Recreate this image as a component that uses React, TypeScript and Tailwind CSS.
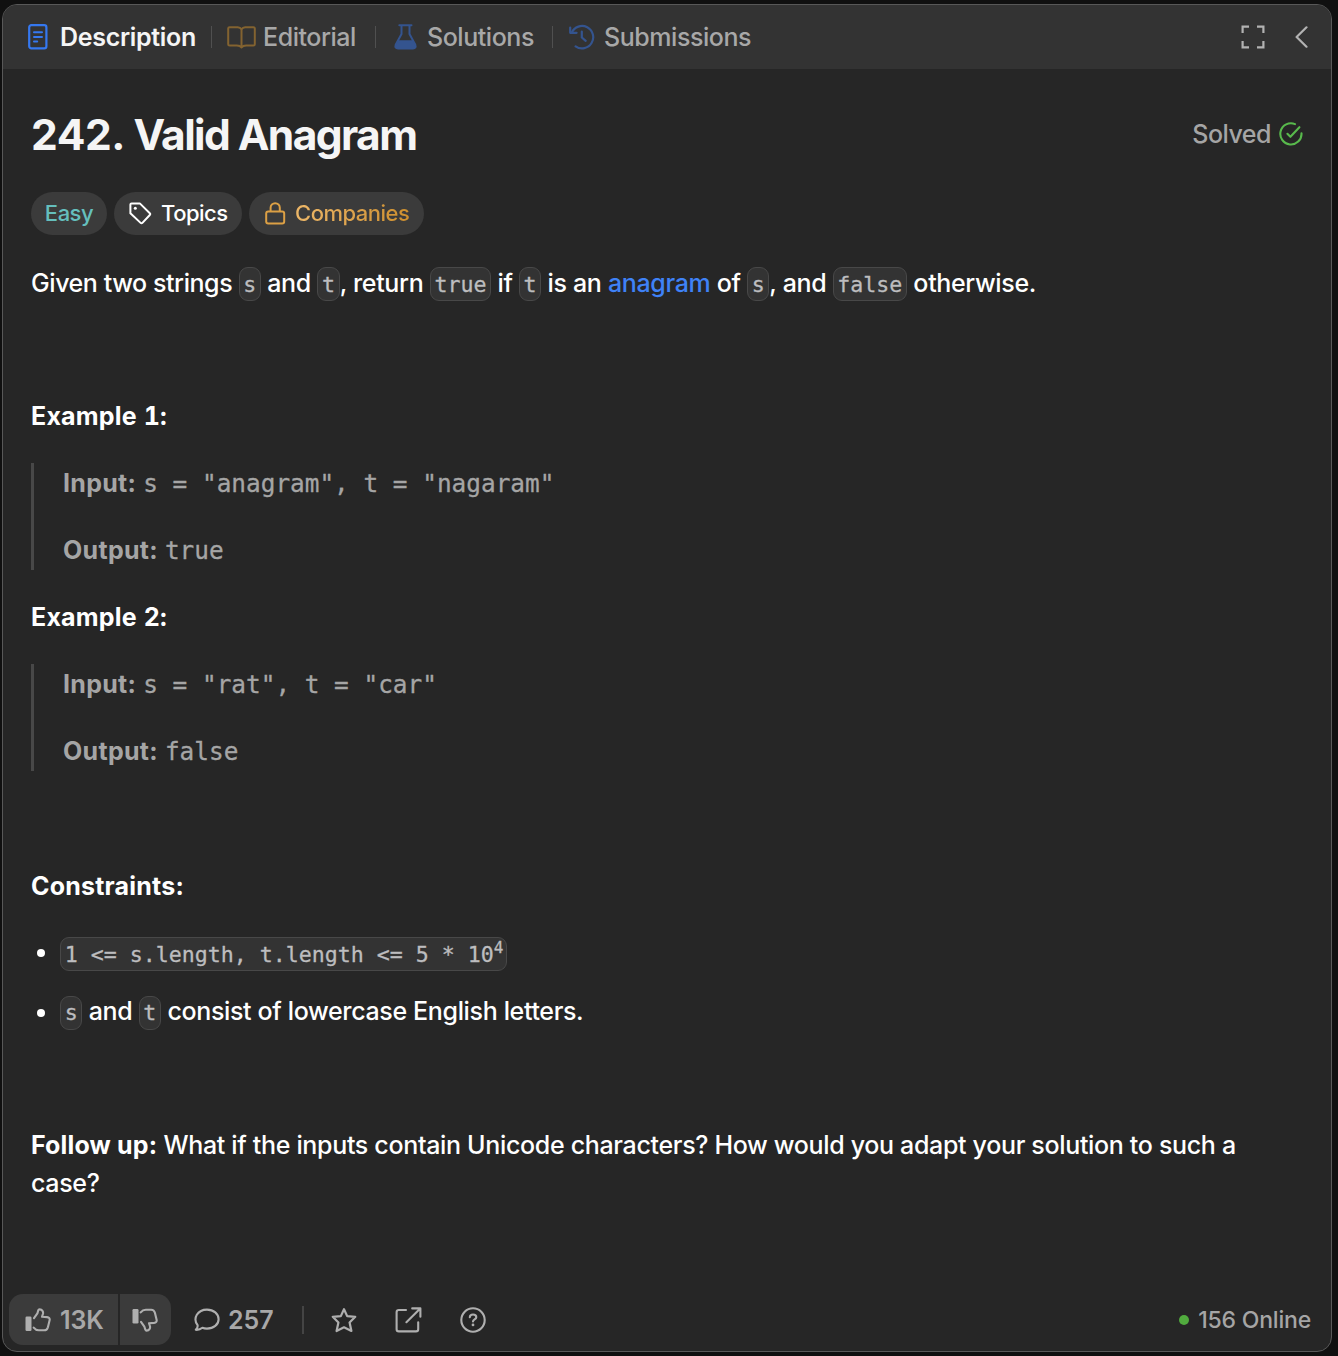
import type { ReactNode } from "react";

function Code({ children, className = "mb-[2px]" }: { children: ReactNode; className?: string }) {
  return (
    <code
      className={`inline-flex h-[34px] items-center rounded-[9px] border border-[#484848] bg-[#333333] px-[3.7px] pt-px align-middle font-['DejaVu_Sans_Mono',monospace] text-[21.6px] leading-none tracking-normal whitespace-pre text-[#bdbdbf] [-webkit-text-stroke:0.3px_#bdbdbf] ${className}`}
    >
      {children}
    </code>
  );
}

function Divider({ className = "" }: { className?: string }) {
  return <div className={`h-[22px] w-px shrink-0 bg-[#505050] ${className}`} />;
}

function Example({ title, input, output, className }: { title: string; input: string; output: string; className: string }) {
  return (
    <section className={className}>
      <h2 className="text-[25px] leading-[38px] font-bold tracking-[0.2px] text-white [font-feature-settings:'tnum']">{title}</h2>
      <div className="mt-[28px] flex h-[107px] flex-col gap-[29.5px] border-l-[3px] border-[#484848] pt-[0.5px] pl-[29px] text-[#a5a5a5]">
        <Field label="Input:" value={input} />
        <Field label="Output:" value={output} />
      </div>
    </section>
  );
}

function Field({ label, value }: { label: string; value: string }) {
  return (
    <div className="flex h-[38px] items-baseline gap-[7px] leading-[38px] whitespace-pre">
      <b className="text-[25px] font-bold tracking-[0.3px]">{label}</b>
      <span className="font-['DejaVu_Sans_Mono',monospace] text-[24.4px] [-webkit-text-stroke:0.3px_#a5a5a5]">{value}</span>
    </div>
  );
}

function ThumbIcon({ className = "" }: { className?: string }) {
  return (
    <svg width="26" height="24" viewBox="0 0 26 24" fill="none" className={className}>
      <rect x="0.5" y="8.5" width="6" height="14.5" rx="1.2" fill="#afafaf" />
      <path
        d="M9 10.2L12.2 5.6C13.2 4.2 12.6 1.4 14.6 1.4C17.2 1.4 18.6 3.6 17.9 6L17 8.8L22 9.1C24.2 9.3 25 10.6 24.6 12.3L22.9 19.2C22.3 21.4 21.2 22.3 19.2 22.3H13.8C11.6 22.3 10 21.3 8.7 19.6"
        stroke="#afafaf"
        strokeWidth="2.1"
        strokeLinejoin="round"
        strokeLinecap="round"
      />
    </svg>
  );
}

export default function App() {
  return (
    <div className="h-[1356px] w-[1338px] bg-[#101010] pt-[4px] pl-[2px] font-['Inter',sans-serif]">
      <main className="flex h-[1348px] w-[1330px] flex-col overflow-hidden rounded-[15px] border border-[#585858] bg-[#262626]">
        <header className="flex h-[64px] shrink-0 items-center bg-[#333333] pl-[25px] text-[25px] font-[450] tracking-[-0.45px] text-[#a8a8a8] [&>span]:mt-[2px]">
          <svg width="20" height="26" viewBox="0 0 20 26" fill="none" stroke="#3578f0" strokeLinecap="round">
            <rect x="1.2" y="1.2" width="17.2" height="23.2" rx="2.2" strokeWidth="2.2" />
            <path d="M6 8.3h8M6 13h8M6 17.6h3.2" strokeWidth="2" />
          </svg>
          <span className="ml-[12px] w-[137px] font-semibold tracking-[-0.3px] text-[#f5f5f5]">Description</span>
          <Divider className="ml-[14px]" />
          <svg className="ml-[15px]" width="29" height="23" viewBox="0 0 29 23" fill="none" stroke="#836330" strokeWidth="2" strokeLinejoin="round">
            <path d="M14.5 3.3C13.6 1.8 12.3 1.2 10.8 1.2H2.6Q1.2 1.2 1.2 2.6V18.2Q1.2 19.4 2.6 19.4H9.8C12 19.4 13.6 19.9 14.5 21.4C15.4 19.9 17 19.4 19.2 19.4H26.4Q27.8 19.4 27.8 18.2V2.6Q27.8 1.2 26.4 1.2H18.2C16.7 1.2 15.4 1.8 14.5 3.3Z" />
            <path d="M14.5 3.3V20.5" />
          </svg>
          <span className="ml-[7px] w-[95px]">Editorial</span>
          <Divider className="ml-[17px]" />
          <svg className="ml-[18px]" width="23" height="26" viewBox="0 0 23 26" fill="none" stroke="#34548f" strokeWidth="2">
            <path d="M5.3 1.3h12.2" strokeLinecap="round" />
            <path d="M7.5 1.5V10L1.7 20.8Q0.6 24.5 4 24.5H19Q22.4 24.5 21.3 20.8L15.5 10V1.5" strokeLinejoin="round" />
            <path d="M4.3 16.2H18.7L21.4 21.2Q22.2 24.5 19 24.5H4Q0.8 24.5 1.6 21.2Z" fill="#34548f" stroke="none" />
          </svg>
          <span className="ml-[10px] w-[108px]">Solutions</span>
          <Divider className="ml-[17px]" />
          <svg className="ml-[16px]" width="26" height="26" viewBox="0 0 26 26" fill="none" stroke="#34548f" strokeWidth="2.2" strokeLinecap="round" strokeLinejoin="round">
            <path d="M2.8 8.6A11.2 11.2 0 1 1 6.6 22.4" />
            <path d="M1.2 3.6V8.8H7.6M12.8 7.5v6l3.9 3.4" />
          </svg>
          <span className="ml-[9px]">Submissions</span>
          <svg className="ml-auto" width="24" height="24" viewBox="0 0 24 24" fill="none" stroke="#b2b2b2" strokeWidth="2.2">
            <path d="M1.6 8V1.6H8M16 1.6H22.4V8M22.4 16V22.4H16M8 22.4H1.6V16" />
          </svg>
          <svg className="mr-[23px] ml-[30px]" width="13" height="22" viewBox="0 0 13 22" fill="none" stroke="#b2b2b2" strokeWidth="2.2" strokeLinecap="round" strokeLinejoin="round">
            <path d="M11.5 1.3L1.6 11L11.5 20.7" />
          </svg>
        </header>

        <article className="flex flex-col pl-[28px] text-white">
          <div className="mt-[36px] flex h-[60px] items-center justify-between pr-[28px]">
            <h1 className="text-[42.5px] leading-[60px] font-bold tracking-[-1.6px] text-[#f5f5f5]">
              <span className="tracking-[-0.45px]">242.</span> Valid Anagram
            </h1>
            <div className="flex items-center gap-[8px] text-[25px] tracking-[-0.5px] text-[#a5a5a5]">
              <span className="font-[450]">Solved</span>
              <svg className="mb-[2px]" width="24" height="24" viewBox="0 0 24 24" fill="none" stroke="#58b94c" strokeWidth="2.1" strokeLinecap="round" strokeLinejoin="round">
                <path d="M16 2.1A10.6 10.6 0 1 0 22.5 11.4" />
                <path d="M8.4 11.8L11.4 14.8L20.4 5.2" />
              </svg>
            </div>
          </div>

          <div className="mt-[27px] flex h-[43px] gap-[7px] text-[22px] font-[450] tracking-[-0.5px]">
            <span className="flex w-[76px] items-center justify-center rounded-full bg-[#3b3b3b] text-[#65bfbd]">Easy</span>
            <span className="flex w-[128px] items-center rounded-full bg-[#3b3b3b] pl-[15px]">
              <svg width="23" height="23" viewBox="0 0 23 23" fill="none" stroke="#ffffff" strokeWidth="2" strokeLinejoin="round">
                <path d="M1.4 2.6Q1.4 1.4 2.6 1.4H10.8L20.8 11.2Q21.7 12.1 20.8 13L13.4 20.9Q12.5 21.8 11.6 20.9L1.4 11.2Z" />
                <circle cx="6.3" cy="6.3" r="1.5" fill="#ffffff" stroke="none" />
              </svg>
              <span className="ml-[9px]">Topics</span>
            </span>
            <span className="flex w-[175px] items-center rounded-full bg-[#3b3b3b] pl-[16px]">
              <svg width="21" height="23" viewBox="0 0 21 23" fill="none" stroke="#dca045" strokeWidth="2">
                <rect x="1.2" y="9.4" width="18" height="12.2" rx="2" />
                <path d="M5.6 9.2V5.8a4.6 4.6 0 0 1 9.2 0V9.2" />
              </svg>
              <span className="ml-[9px] bg-linear-to-r from-[#edb768] to-[#cd8f2d] bg-clip-text text-transparent">Companies</span>
            </span>
          </div>

          <p className="mt-[29px] h-[38px] text-[25px] leading-[38px] font-[450] tracking-[-0.34px] whitespace-nowrap">
            <span className="tracking-[-0.43px]">Given two strings</span> <Code>s</Code> and <Code>t</Code>, return <Code>true</Code> if <Code>t</Code> is an{" "}
            <a className="text-[#3f82f7]">anagram</a> of <Code>s</Code>, and <Code>false</Code> otherwise.
          </p>

          <Example className="mt-[95px]" title="Example 1:" input={'s = "anagram", t = "nagaram"'} output="true" />
          <Example className="mt-[28px]" title="Example 2:" input={'s = "rat", t = "car"'} output="false" />

          <h2 className="mt-[96px] text-[25px] leading-[38px] font-bold tracking-[0.2px]">Constraints:</h2>
          <ul className="mt-[30px] flex flex-col gap-[21px] text-[25px] leading-[38px] font-[450] tracking-[-0.35px]">
            <li className="flex h-[38px] items-center">
              <span className="mt-[-2px] ml-[6px] size-[8px] rounded-full bg-white" />
              <Code className="ml-[15px] w-[447px]">
                {"1 <= s.length, t.length <= 5 * 10"}
                <sup className="top-[-7px] text-[16px] leading-none">4</sup>
              </Code>
            </li>
            <li className="flex h-[38px] items-center">
              <span className="ml-[6px] size-[8px] rounded-full bg-white" />
              <span className="mt-[-2px] ml-[15px] whitespace-nowrap">
                <Code>s</Code> and <Code>t</Code> consist of lowercase English letters.
              </span>
            </li>
          </ul>

          <p className="mt-[94px] text-[25px] leading-[38px] font-[450] tracking-[-0.33px]">
            <b className="font-bold tracking-[0.15px]">Follow up:</b> What if the inputs contain Unicode characters? How would you adapt your solution to such a
            <br />
            case?
          </p>
        </article>

        <footer className="mt-auto mb-[6px] flex h-[51px] shrink-0 items-center pl-[6px] text-[25px] font-semibold text-[#a8a8a8]">
          <div className="flex h-full w-[109px] items-center rounded-l-[14px] bg-[#3b3b3b] pl-[16px]">
            <ThumbIcon />
            <span className="mt-[2px] ml-[9px] tracking-[-0.1px]">13K</span>
          </div>
          <div className="ml-[2px] flex h-full w-[51px] items-center rounded-r-[14px] bg-[#3b3b3b] pl-[12px]">
            <ThumbIcon className="-scale-y-100" />
          </div>
          <svg className="ml-[23px]" width="26" height="24" viewBox="0 0 26 24" fill="none" stroke="#afafaf" strokeWidth="2.1" strokeLinejoin="round">
            <path d="M3.6 17.2C-1.6 10.2 3.6 1.6 13 1.6C19.7 1.6 24.6 5.8 24.6 11.2C24.6 16.6 19.6 20.6 13 20.6C11.4 20.6 9.8 20.4 8.4 19.8C6.4 21.4 4.2 22 1.8 21.8C3.2 20.4 3.9 18.8 3.6 17.2Z" />
          </svg>
          <span className="mt-[2px] ml-[8px] w-[46px]">257</span>
          <div className="ml-[28px] h-[28px] w-[2px] bg-[#444444]" />
          <svg className="ml-[27px]" width="26" height="26" viewBox="0 0 27 26" fill="none" stroke="#afafaf" strokeWidth="2.3" strokeLinejoin="round">
            <path d="M13.5 1.8L16.8 9L25.2 9.7L19.3 15.6L21.2 24.4L13.5 20.6L5.8 24.4L7.7 15.6L1.8 9.7L10.2 9Z" />
          </svg>
          <svg className="ml-[38px]" width="27" height="26" viewBox="0 0 27 26" fill="none" stroke="#afafaf" strokeWidth="2.1" strokeLinejoin="round" strokeLinecap="round">
            <path d="M11 3H3.8Q1.6 3 1.6 5.2V22.2Q1.6 24.4 3.8 24.4H21Q23.2 24.4 23.2 22.2V15.2M17.2 1.4H25.4V9.8M25 1.8L11.4 15.2" />
          </svg>
          <svg className="ml-[38px]" width="26" height="26" viewBox="0 0 26 26" fill="none" stroke="#afafaf" strokeWidth="2.1" strokeLinecap="round">
            <circle cx="13" cy="13" r="11.7" />
            <path d="M9.8 10.2C9.9 8.3 11.2 7.5 13 7.5C14.9 7.5 16.3 8.5 16.3 10.2C16.3 12.4 13 12.4 13 14.4" />
            <circle cx="13" cy="17.9" r="1.4" fill="#afafaf" stroke="none" />
          </svg>
          <div className="mr-[20px] ml-auto flex items-center gap-[9px] text-[23px] font-[550] tracking-[-0.2px] text-[#a5a5a5]">
            <span className="size-[10px] rounded-full bg-[#51ab3e]" />
            <span className="mt-px">156 Online</span>
          </div>
        </footer>
      </main>
    </div>
  );
}
